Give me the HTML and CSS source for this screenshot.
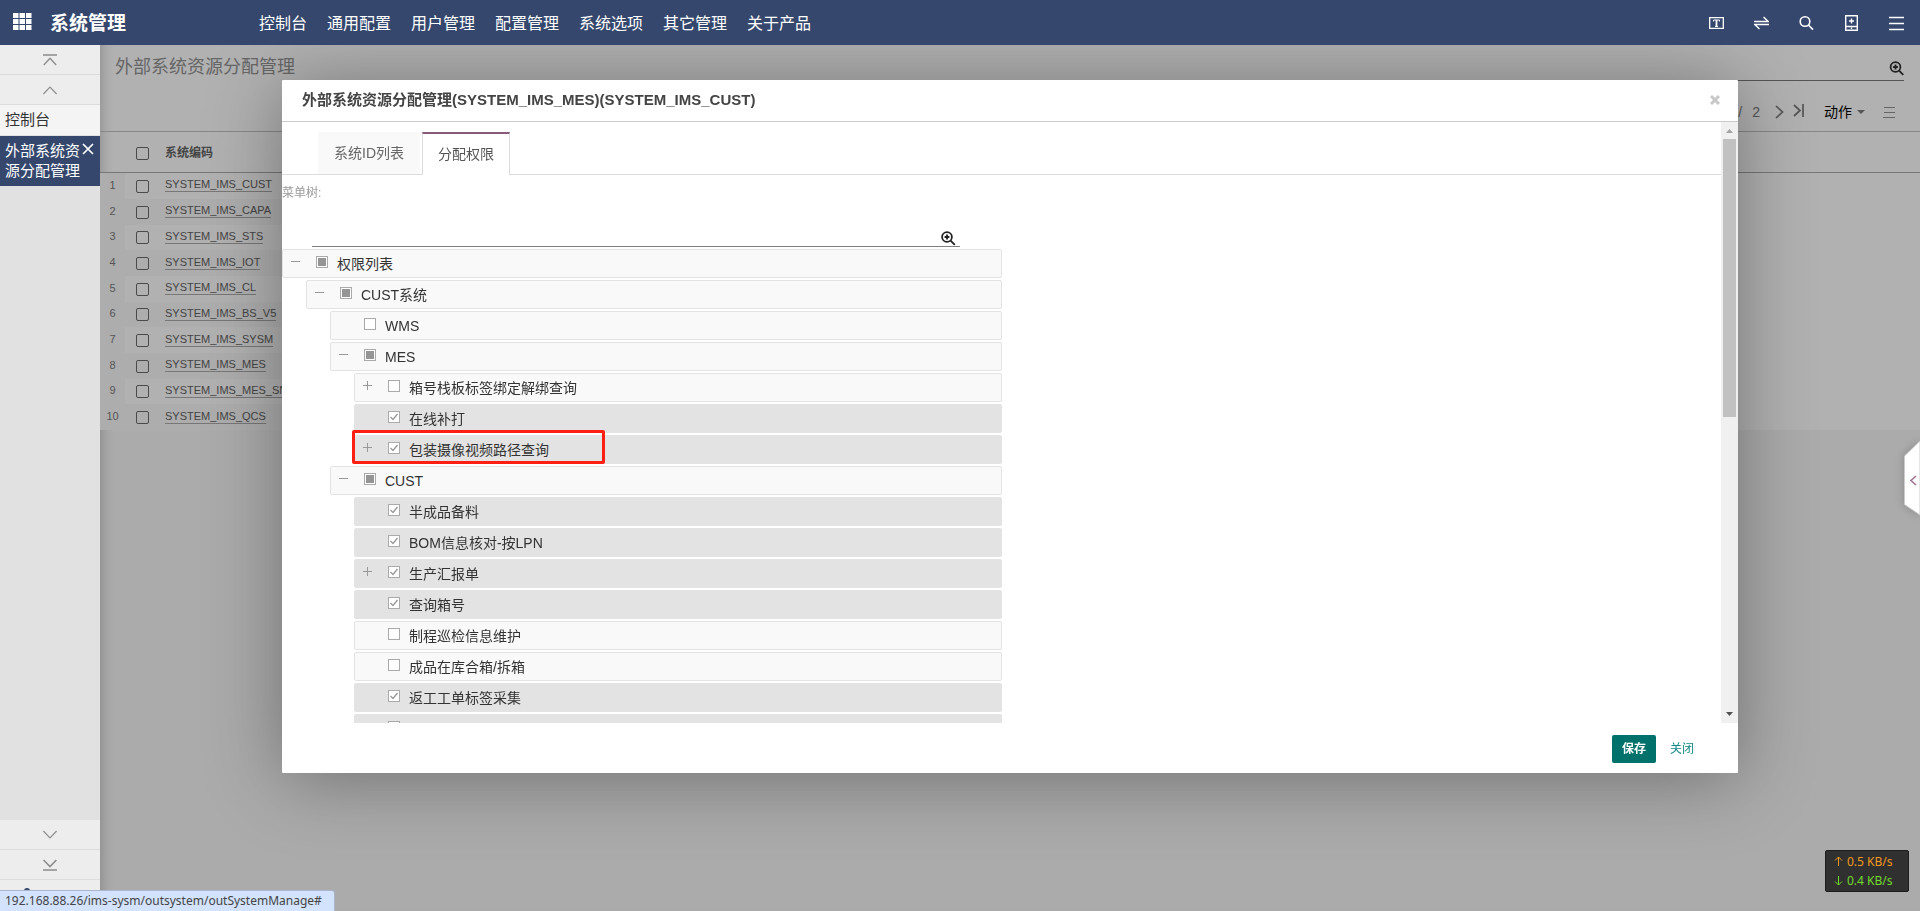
FILE: index.html
```html
<!DOCTYPE html>
<html lang="zh-CN">
<head>
<meta charset="utf-8">
<title>系统管理</title>
<link rel="stylesheet" href="styles.css">
</head>
<body>
<header class="topbar">
  <button class="icon-btn apps" aria-label="应用"><svg width="19" height="18" viewBox="0 0 19 18" fill="#fff"><path d="M0 0h5.500v5H0zM6.500 0h5.500v5H6.500zM13 0h5.500v5H13zM0 6h5.500v5H0zM6.500 6h5.500v5H6.500zM13 6h5.500v5H13zM0 12h5.500v5H0zM6.500 12h5.500v5H6.500zM13 12h5.500v5H13z"/></svg></button>
  <h1 class="brand">系统管理</h1>
  <nav class="mainnav">
    <a href="#">控制台</a><a href="#">通用配置</a><a href="#">用户管理</a><a href="#">配置管理</a><a href="#">系统选项</a><a href="#">其它管理</a><a href="#">关于产品</a>
  </nav>
  <div class="tools">
    <button class="icon-btn" aria-label="文本"><svg width="15" height="16" viewBox="0 0 15 16" fill="none" stroke="#fff"><path stroke-width="1.3" d="M.7 2.700h13.600v10.600H.7z"/><path stroke-width="1" d="M4.500 6.500v-1.500h6v1.500M6 11.500h3"/><path stroke-width="1.8" d="M7.500 5v6.500"/></svg></button>
    <button class="icon-btn" aria-label="切换"><svg width="15" height="16" viewBox="0 0 15 16" fill="none" stroke="#fff" stroke-width="1.4"><path d="M0 6.500h14.200L9.500 2M15 9.500H.8L5.500 14"/></svg></button>
    <button class="icon-btn" aria-label="搜索"><svg width="15" height="16" viewBox="0 0 15 16" fill="none" stroke="#fff" stroke-width="1.6"><circle cx="6" cy="6.500" r="4.800"/><path d="M9.400 10l4.600 4.600"/></svg></button>
    <button class="icon-btn" aria-label="下载"><svg width="15" height="18" viewBox="0 0 15 18" fill="none" stroke="#fff" stroke-width="1.4"><path d="M1.700 1.700h11.600v14.600H1.700zM1.700 12.500h11.600M7.500 4.500v5M5 7h5M7.500 13.500v1.600"/></svg></button>
    <button class="icon-btn" aria-label="菜单"><svg width="15" height="16" viewBox="0 0 15 16" stroke="#fff" stroke-width="1.6"><path d="M0 2.500h15M0 8.500h15M0 14.500h15"/></svg></button>
  </div>
</header>

<div class="workspace">
  <aside class="sidebar">
    <button class="side-btn" aria-label="顶部"><svg width="14" height="12" viewBox="0 0 14 12" fill="none" stroke="#8c8c8c" stroke-width="1.3"><path d="M0 1h14M.8 11L7 4.200l6.200 6.800"/></svg></button>
    <button class="side-btn" aria-label="向上"><svg width="14" height="12" viewBox="0 0 14 12" fill="none" stroke="#8c8c8c" stroke-width="1.1"><path d="M.4 10L7 3l6.600 7"/></svg></button>
    <a class="side-link" href="#">控制台</a>
    <a class="side-link active" href="#"><span>外部系统资<br>源分配管理</span><svg width="12" height="12" viewBox="0 0 12 12" stroke="#fff" stroke-width="1.7"><path d="M1 1l10 10M11 1L1 11"/></svg></a>
    <div class="side-bottom">
      <button class="side-btn" aria-label="向下"><svg width="14" height="12" viewBox="0 0 14 12" fill="none" stroke="#8c8c8c" stroke-width="1.1"><path d="M.4 2L7 9l6.600-7"/></svg></button>
      <button class="side-btn" aria-label="底部"><svg width="14" height="12" viewBox="0 0 14 12" fill="none" stroke="#8c8c8c" stroke-width="1.5"><path d="M.6 1L7 7.600 13.400 1M0 11h14"/></svg></button>
      <button class="side-btn last" aria-label="设置"><svg width="14" height="24" viewBox="0 0 14 24" fill="#35476d"><circle cx="3" cy="7" r="3"/></svg></button>
    </div>
  </aside>

  <main class="page">
    <div class="page-head">
      <h2>外部系统资源分配管理</h2>
      <div class="page-search"><button class="icon-btn" aria-label="搜索"><svg width="15" height="15" viewBox="0 0 15 15" fill="none" stroke="#222" stroke-width="1.8"><circle cx="6.500" cy="6" r="4.900"/><path d="M10.100 9.600l4.200 4.200M6.500 3.600v4.800M4.100 6h4.800"/></svg></button></div>
    </div>
    <div class="pager">
      <span>/</span><span class="total">2</span>
      <button class="icon-btn" aria-label="下一页"><svg width="9" height="14" viewBox="0 0 9 14" fill="none" stroke="#555" stroke-width="1.700"><path d="M1 1l6.500 6L1 13"/></svg></button>
      <button class="icon-btn end" aria-label="末页"><svg width="11" height="13" viewBox="0 0 11 13" fill="none" stroke="#555" stroke-width="1.700"><path d="M1 1l6 5.500L1 12M10 0v13"/></svg></button>
      <button class="action">动作<svg width="8" height="4" viewBox="0 0 8 4" fill="#555"><path d="M0 0h8L4 4z"/></svg></button>
      <button class="icon-btn" aria-label="列表"><svg width="12" height="12" viewBox="0 0 12 12" stroke="#666" stroke-width="1"><path d="M1 1.500h11M1 6.500h11M0 11.500h12"/></svg></button>
    </div>
    <table class="grid">
      <thead><tr><th class="no"></th><th class="ck"><input type="checkbox" aria-label="全选"></th><th class="code">系统编码</th><th></th></tr></thead>
      <tbody>
        <tr><td class="no">1</td><td class="ck"><input type="checkbox" aria-label="1"></td><td class="code"><a href="#">SYSTEM_IMS_CUST</a></td><td></td></tr>
        <tr><td class="no">2</td><td class="ck"><input type="checkbox" aria-label="2"></td><td class="code"><a href="#">SYSTEM_IMS_CAPA</a></td><td></td></tr>
        <tr><td class="no">3</td><td class="ck"><input type="checkbox" aria-label="3"></td><td class="code"><a href="#">SYSTEM_IMS_STS</a></td><td></td></tr>
        <tr><td class="no">4</td><td class="ck"><input type="checkbox" aria-label="4"></td><td class="code"><a href="#">SYSTEM_IMS_IOT</a></td><td></td></tr>
        <tr><td class="no">5</td><td class="ck"><input type="checkbox" aria-label="5"></td><td class="code"><a href="#">SYSTEM_IMS_CL</a></td><td></td></tr>
        <tr><td class="no">6</td><td class="ck"><input type="checkbox" aria-label="6"></td><td class="code"><a href="#">SYSTEM_IMS_BS_V5</a></td><td></td></tr>
        <tr><td class="no">7</td><td class="ck"><input type="checkbox" aria-label="7"></td><td class="code"><a href="#">SYSTEM_IMS_SYSM</a></td><td></td></tr>
        <tr><td class="no">8</td><td class="ck"><input type="checkbox" aria-label="8"></td><td class="code"><a href="#">SYSTEM_IMS_MES</a></td><td></td></tr>
        <tr><td class="no">9</td><td class="ck"><input type="checkbox" aria-label="9"></td><td class="code"><a href="#">SYSTEM_IMS_MES_SN</a></td><td></td></tr>
        <tr><td class="no">10</td><td class="ck"><input type="checkbox" aria-label="10"></td><td class="code"><a href="#">SYSTEM_IMS_QCS</a></td><td></td></tr>
      </tbody>
    </table>
  </main>
</div>

<div class="overlay">
  <section class="modal" role="dialog" aria-labelledby="dlg-title">
    <div class="modal-head">
      <h3 id="dlg-title">外部系统资源分配管理(SYSTEM_IMS_MES)(SYSTEM_IMS_CUST)</h3>
      <button class="icon-btn" aria-label="关闭窗口"><svg width="10" height="10" viewBox="0 0 10 10" stroke="#c8c8c8" stroke-width="3"><path d="M1 1l8 8M9 1L1 9"/></svg></button>
    </div>
    <div class="modal-body">
      <div class="body-content">
        <div class="tabs">
          <button class="tab">系统ID列表</button>
          <button class="tab current">分配权限</button>
        </div>
        <label class="tree-label" for="tree-search">菜单树:</label>
        <div class="tree-search">
          <input type="text" id="tree-search">
          <button class="icon-btn" aria-label="查找"><svg width="15" height="15" viewBox="0 0 15 15" fill="none" stroke="#222" stroke-width="1.800"><circle cx="6" cy="6" r="4.900"/><path d="M9.600 9.600l4.200 4.200M6 3.600v4.800M3.600 6h4.800"/></svg></button>
        </div>
        <ul class="tree">
          <li class="node l1"><button class="exp minus" aria-label="收起"></button><label><input type="checkbox" class="partial">权限列表</label></li>
          <li class="node l2"><button class="exp minus" aria-label="收起"></button><label><input type="checkbox" class="partial">CUST系统</label></li>
          <li class="node l3"><span class="exp"></span><label><input type="checkbox">WMS</label></li>
          <li class="node l3"><button class="exp minus" aria-label="收起"></button><label><input type="checkbox" class="partial">MES</label></li>
          <li class="node l4"><button class="exp plus" aria-label="展开"></button><label><input type="checkbox">箱号栈板标签绑定解绑查询</label></li>
          <li class="node l4 on"><span class="exp"></span><label><input type="checkbox" checked>在线补打</label></li>
          <li class="node l4 on marked"><button class="exp plus" aria-label="展开"></button><label><input type="checkbox" checked>包装摄像视频路径查询</label></li>
          <li class="node l3"><button class="exp minus" aria-label="收起"></button><label><input type="checkbox" class="partial">CUST</label></li>
          <li class="node l4 on"><span class="exp"></span><label><input type="checkbox" checked>半成品备料</label></li>
          <li class="node l4 on"><span class="exp"></span><label><input type="checkbox" checked>BOM信息核对-按LPN</label></li>
          <li class="node l4 on"><button class="exp plus" aria-label="展开"></button><label><input type="checkbox" checked>生产汇报单</label></li>
          <li class="node l4 on"><span class="exp"></span><label><input type="checkbox" checked>查询箱号</label></li>
          <li class="node l4"><span class="exp"></span><label><input type="checkbox">制程巡检信息维护</label></li>
          <li class="node l4"><span class="exp"></span><label><input type="checkbox">成品在库合箱/拆箱</label></li>
          <li class="node l4 on"><span class="exp"></span><label><input type="checkbox" checked>返工工单标签采集</label></li>
          <li class="node l4 on"><span class="exp"></span><label><input type="checkbox" checked aria-label="更多"></label></li>
        </ul>
      </div>
      <div class="scrollbar">
        <svg width="17" height="17" viewBox="0 0 17 17" fill="#a3a3a3"><path d="M5 11l3.500-4 3.500 4z"/></svg>
        <div class="thumb"></div>
        <svg width="17" height="17" viewBox="0 0 17 17" fill="#505050"><path d="M5 6h7l-3.500 4z"/></svg>
      </div>
    </div>
    <div class="modal-foot">
      <button class="save">保存</button>
      <button class="close">关闭</button>
    </div>
  </section>
</div>

<button class="drawer-tab" aria-label="展开侧栏"><svg width="16" height="76" viewBox="0 0 16 76"><path d="M16 1L.5 16v48.500L16 75z" fill="#fff" stroke="#ccc"/><path d="M12 36l-5 4.500 5 4.500" fill="none" stroke="#9c7391" stroke-width="1.600"/></svg></button>
<div class="netmeter">
  <div class="up"><svg width="9" height="11" viewBox="0 0 9 11" fill="none" stroke="currentColor"><path d="M4.500 1v9M1 4.500L4.500 1 8 4.500"/></svg>0.5 KB/s</div>
  <div class="down"><svg width="9" height="11" viewBox="0 0 9 11" fill="none" stroke="currentColor"><path d="M4.500 1v9M1 6.500L4.500 10 8 6.500"/></svg>0.4 KB/s</div>
</div>
<div class="statusbar">192.168.88.26/ims-sysm/outsystem/outSystemManage#</div>
</body>
</html>
```
FILE: styles.css
```css
*, *::after { box-sizing: border-box; }
body {
  margin: 0;
  height: 100vh;
  display: flex;
  flex-direction: column;
  overflow: hidden;
  font-family: "Liberation Sans", "Noto Sans CJK SC", sans-serif;
  font-size: 14px;
  color: #333;
}
h1, h2, h3, ul { margin: 0; padding: 0; }
button { font: inherit; border: 0; background: none; padding: 0; cursor: pointer; }
a { color: inherit; text-decoration: none; }
svg { display: block; }
.icon-btn { display: flex; align-items: center; justify-content: center; }

.topbar {
  height: 45px;
  flex: none;
  display: flex;
  align-items: center;
  padding: 0 16px 0 13px;
  background: #35476d;
  color: #fff;
}
.apps { padding-bottom: 1px; }
.brand { width: 209px; margin-left: 18px; padding-top: 3px; font-size: 19px; line-height: 24px; }
.mainnav { display: flex; gap: 20px; padding-top: 3px; font-size: 16px; line-height: 24px; }
.tools { margin-left: auto; display: flex; align-items: center; gap: 30px; }

.workspace { flex: 1; min-height: 0; display: flex; }
.sidebar {
  width: 100px;
  display: flex;
  flex-direction: column;
  background: #e1e1e1;
  font-size: 15px;
  line-height: 20px;
}
.side-btn {
  width: 100%;
  height: 30px;
  display: flex;
  align-items: center;
  justify-content: center;
  background: #ededed;
  border-bottom: 1px solid #dcdcdc;
}
.side-link {
  display: flex;
  justify-content: space-between;
  padding: 5px;
  background: #f5f4f5;
  color: #333;
}
.side-link + .side-link { margin-top: 1px; }
.side-link.active { background: #35476d; color: #fff; }
.side-link svg { margin: 2px 1px 0 0; }
.side-bottom { margin-top: auto; }
.side-btn.last { height: 31px; border: 0; padding: 0 38px 0 0; }

.page {
  flex: 1;
  background: linear-gradient(#b1b1b1 385px, #ababab 385px);
  box-shadow: inset 12px 0 12px -10px rgba(0, 0, 0, .2);
}
.page-head {
  height: 36px;
  margin: 0 16px 0 15px;
  display: flex;
  justify-content: space-between;
}
.page-head h2 { padding-top: 10px; font-size: 18px; font-weight: 400; line-height: 24px; color: #666; }
.page-search {
  width: 50%;
  display: flex;
  align-items: flex-end;
  justify-content: flex-end;
  padding-bottom: 4px;
  border-bottom: 1px solid #555;
}
.pager {
  height: 50px;
  display: flex;
  align-items: center;
  justify-content: flex-end;
  padding: 12px 25px 0 0;
  color: #555;
  line-height: 20px;
}
.total { margin: 0 15px 0 10px; }
.end { margin: 0 20px 4px 9px; }
.action { display: flex; align-items: center; gap: 5px; margin-right: 18px; }
.grid {
  width: 100%;
  height: 299px;
  border-collapse: collapse;
  table-layout: fixed;
  font-size: 11px;
  color: #444;
  border-top: 1px solid #888;
}
.grid thead tr { height: 41px; border-bottom: 1px solid #777; }
.grid th { font-size: 12px; text-align: left; padding: 0; color: #444; }
.grid td { padding: 0; line-height: 14px; }
.grid tbody .no { width: 25px; padding-bottom: 2px; text-align: center; color: #555; }
.grid th.no { width: 25px; }
.grid .ck { width: 40px; padding-left: 11px; }
.grid .code { width: 320px; padding-bottom: 2px; }
.grid tbody .no, .grid tbody tr:nth-child(even) .ck, .grid tbody tr:nth-child(even) .code { background: #adadad; }
.grid td a { display: inline-block; border-bottom: 1px solid #777; }
.grid input {
  display: block;
  appearance: none;
  width: 13px;
  height: 13px;
  margin: 1px 0 0;
  border: 1px solid #4a4a4a;
  border-radius: 2px;
}
.grid th input { margin-top: 3px; }

.overlay {
  position: fixed;
  inset: 45px 0 0 100px;
  display: flex;
  padding: 35px 182px 138px;
  overflow: hidden;
}
.modal {
  flex: 1;
  display: flex;
  flex-direction: column;
  background: #fff;
  border-radius: 1px;
  box-shadow: 0 5px 75px rgba(0, 0, 0, .35);
}
.modal-head {
  height: 42px;
  display: flex;
  align-items: center;
  justify-content: space-between;
  padding: 0 18px 1px 20px;
  border-bottom: 1px solid #ccc;
}
.modal-head h3 { font-size: 15px; line-height: 20px; color: #444; }
.modal-body { flex: 1; min-height: 0; display: flex; }
.body-content { flex: 1; min-width: 0; overflow: hidden; }
.tabs {
  display: flex;
  gap: 2px;
  height: 53px;
  padding: 10px 36px 0;
  border-bottom: 1px solid #dcdcdc;
  font-size: 14px;
}
.tab { padding: 0 16px 2px; color: #666; background: #f9f9f9; }
.tab.current {
  height: 43px;
  padding: 0 15px 3px;
  color: #555;
  background: #fff;
  border: 1px solid #dcdcdc;
  border-top: 2px solid #875a7b;
  border-bottom: 0;
}
.tree-label { display: block; padding: 9px 0 0; font-size: 12px; line-height: 18px; color: #999; }
.tree-search {
  width: 648px;
  height: 33px;
  margin: 12px 0 2px 30px;
  display: flex;
  align-items: flex-end;
  border-bottom: 1px solid #808080;
}
.tree-search input { flex: 1; height: 30px; border: 0; outline: 0; background: none; }
.tree-search button { padding: 0 4px 0 0; }
.tree { width: 720px; list-style: none; display: flex; flex-direction: column; gap: 2px; }
.node {
  position: relative;
  height: 29px;
  display: flex;
  align-items: center;
  border: 1px solid #e3e3e3;
  border-radius: 2px;
  background: #f9f9f9;
}
.node.on { background: #e3e3e3; }
.l2 { margin-left: 24px; }
.l3 { margin-left: 48px; }
.l4 { margin-left: 72px; }
.node label { display: flex; align-items: center; gap: 9px; line-height: 20px; }
.node input {
  appearance: none;
  width: 12px;
  height: 12px;
  margin: 0 0 3px;
  border: 1px solid #aaa;
  background: #fff center no-repeat;
}
.node input.partial { background: #959595; box-shadow: inset 0 0 0 1px #fff; }
.node input:checked { background-image: url("data:image/svg+xml,%3Csvg xmlns='http://www.w3.org/2000/svg' width='10' height='10'%3E%3Cpath d='M1.500 5l2.500 2.500L8.500 2' fill='none' stroke='%23999' stroke-width='1.300'/%3E%3C/svg%3E"); }
.exp { width: 9px; height: 9px; margin: 0 16px 4px 8px; }
.minus { background: linear-gradient(#999, #999) center / 9px 1px no-repeat; }
.plus { background: linear-gradient(#999, #999) center / 9px 1px no-repeat, linear-gradient(#999, #999) center / 1px 9px no-repeat; }
.marked { z-index: 1; }
.marked::after {
  content: "";
  position: absolute;
  left: -3px;
  top: -6px;
  width: 253px;
  height: 34px;
  border: 3px solid #ff1e12;
  border-radius: 2px;
}
.scrollbar { width: 17px; display: flex; flex-direction: column; background: #f0f0f0; }
.thumb { height: 278px; margin: 0 2px auto; background: #c1c1c1; }
.modal-foot {
  height: 50px;
  display: flex;
  align-items: center;
  justify-content: flex-end;
  gap: 14px;
  padding: 2px 44px 0 0;
  font-size: 12px;
}
.save { padding: 0 10px; line-height: 28px; border-radius: 2px; background: #00716b; color: #fff; font-weight: 700; }
.close { color: #148a84; line-height: 28px; }

.drawer-tab { position: fixed; right: 0; top: 440px; filter: drop-shadow(0 0 4px rgba(0, 0, 0, .2)); }
.netmeter {
  position: fixed;
  right: 11px;
  bottom: 19px;
  width: 84px;
  padding: 1px 8px;
  background: #303030;
  border: 1px solid #1c1c1c;
  border-radius: 2px;
  font: 12px/19px "Noto Sans", sans-serif;
}
.netmeter div { display: flex; align-items: center; gap: 4px; }
.up { color: #f39a1d; }
.down { color: #72dc2a; }
.statusbar {
  position: fixed;
  left: 0;
  bottom: 0;
  padding: 0 12px 0 5px;
  background: #d3e3fd;
  border: 1px solid #a9b6cb;
  border-width: 1px 1px 0 0;
  border-radius: 0 3px 0 0;
  font: 12px/20px "Noto Sans", sans-serif;
  color: #444;
}
```
